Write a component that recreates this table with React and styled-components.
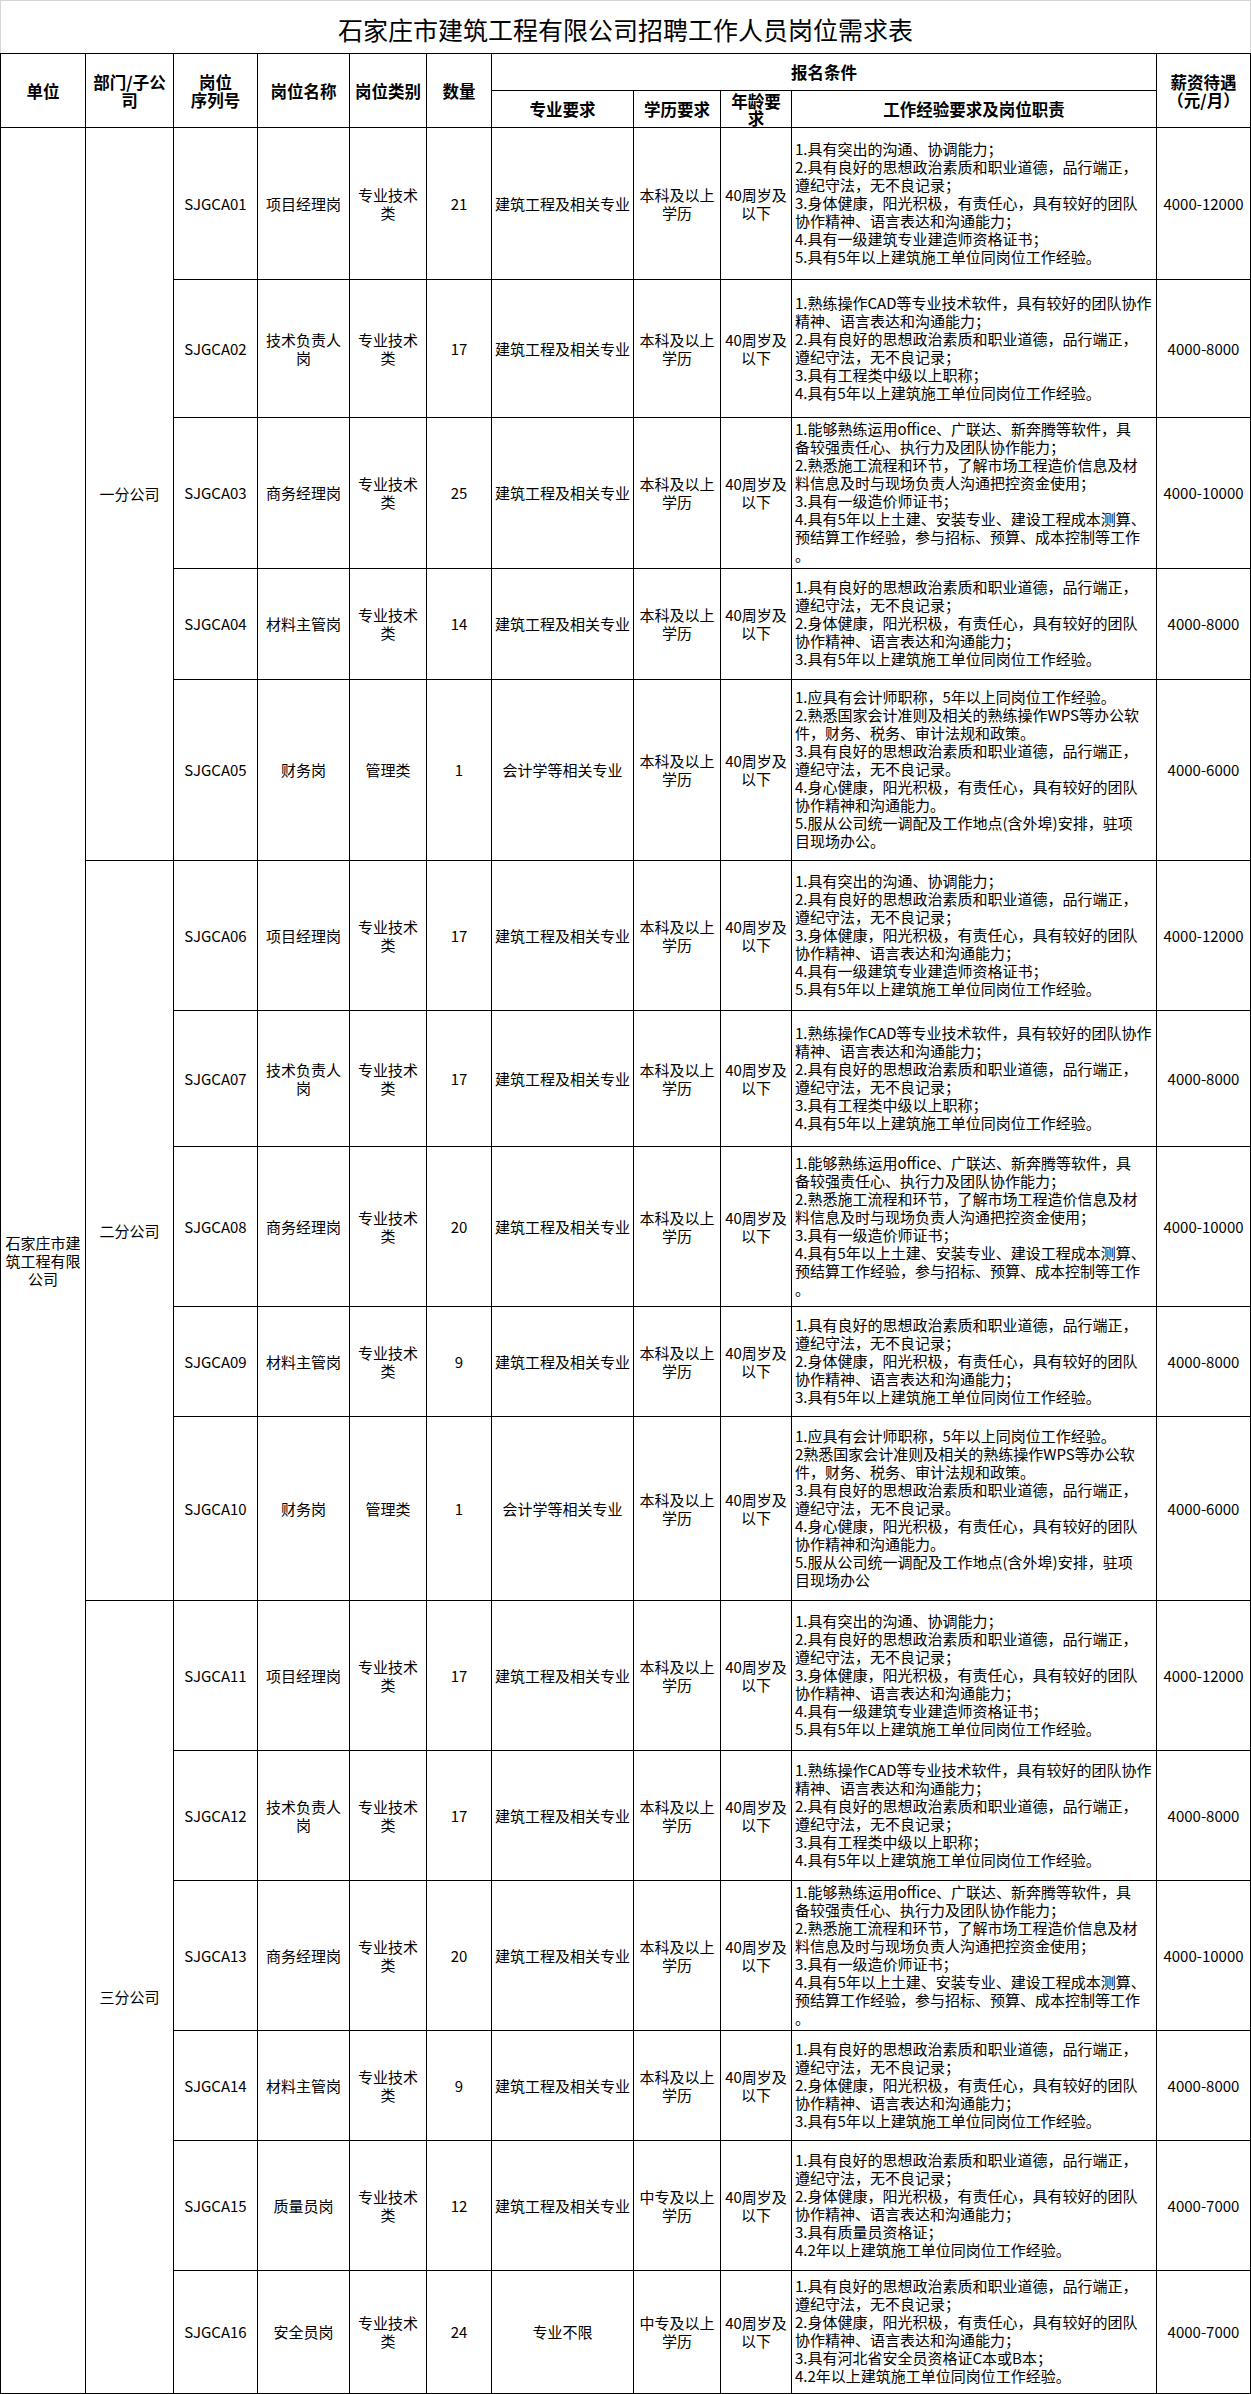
import React from 'react';
import styled, { createGlobalStyle } from 'styled-components';

const GlobalStyle = createGlobalStyle`
  html, body {
    margin: 0;
    padding: 0;
    background: #fff;
  }
  body {
    font-family: "Noto Sans CJK SC", "Liberation Sans", sans-serif;
    color: #000;
  }
`;

// widths between the 1px rules of the sheet
const COLS = [84, 87, 83, 91, 76, 64, 141, 86, 70, 364, 93];
const HEAD_ROWS = [36, 36];

const DETAIL_PM = [
  '1.具有突出的沟通、协调能力；',
  '2.具有良好的思想政治素质和职业道德，品行端正，',
  '遵纪守法，无不良记录；',
  '3.身体健康，阳光积极，有责任心，具有较好的团队',
  '协作精神、语言表达和沟通能力；',
  '4.具有一级建筑专业建造师资格证书；',
  '5.具有5年以上建筑施工单位同岗位工作经验。',
].join('\n');

const DETAIL_TECH = [
  '1.熟练操作CAD等专业技术软件，具有较好的团队协作',
  '精神、语言表达和沟通能力；',
  '2.具有良好的思想政治素质和职业道德，品行端正，',
  '遵纪守法，无不良记录；',
  '3.具有工程类中级以上职称；',
  '4.具有5年以上建筑施工单位同岗位工作经验。',
].join('\n');

const DETAIL_BIZ = [
  '1.能够熟练运用office、广联达、新奔腾等软件，具',
  '备较强责任心、执行力及团队协作能力；',
  '2.熟悉施工流程和环节，了解市场工程造价信息及材',
  '料信息及时与现场负责人沟通把控资金使用；',
  '3.具有一级造价师证书；',
  '4.具有5年以上土建、安装专业、建设工程成本测算、',
  '预结算工作经验，参与招标、预算、成本控制等工作',
  '。',
].join('\n');

const DETAIL_MAT = [
  '1.具有良好的思想政治素质和职业道德，品行端正，',
  '遵纪守法，无不良记录；',
  '2.身体健康，阳光积极，有责任心，具有较好的团队',
  '协作精神、语言表达和沟通能力；',
  '3.具有5年以上建筑施工单位同岗位工作经验。',
].join('\n');

const detailFinance = (second, last) =>
  [
    '1.应具有会计师职称，5年以上同岗位工作经验。',
    second,
    '件，财务、税务、审计法规和政策。',
    '3.具有良好的思想政治素质和职业道德，品行端正，',
    '遵纪守法，无不良记录。',
    '4.身心健康，阳光积极，有责任心，具有较好的团队',
    '协作精神和沟通能力。',
    '5.服从公司统一调配及工作地点(含外埠)安排，驻项',
    last,
  ].join('\n');

const detailSite = (cert) =>
  [
    '1.具有良好的思想政治素质和职业道德，品行端正，',
    '遵纪守法，无不良记录；',
    '2.身体健康，阳光积极，有责任心，具有较好的团队',
    '协作精神、语言表达和沟通能力；',
    cert,
    '4.2年以上建筑施工单位同岗位工作经验。',
  ].join('\n');

const TECH = '专业技术\n类';
const MAJOR = '建筑工程及相关专业';
const BACHELOR = '本科及以上\n学历';
const SECONDARY = '中专及以上\n学历';
const AGE = '40周岁及\n以下';

const job = (code, name, type, count, major, edu, detail, pay, h) => ({
  code, name, type, count, major, edu, detail, pay, h,
});

const BRANCHES = [
  {
    name: '一分公司',
    jobs: [
      job('SJGCA01', '项目经理岗', TECH, 21, MAJOR, BACHELOR, DETAIL_PM, '4000-12000', 151),
      job('SJGCA02', '技术负责人\n岗', TECH, 17, MAJOR, BACHELOR, DETAIL_TECH, '4000-8000', 137),
      job('SJGCA03', '商务经理岗', TECH, 25, MAJOR, BACHELOR, DETAIL_BIZ, '4000-10000', 150),
      job('SJGCA04', '材料主管岗', TECH, 14, MAJOR, BACHELOR, DETAIL_MAT, '4000-8000', 110),
      job('SJGCA05', '财务岗', '管理类', 1, '会计学等相关专业', BACHELOR,
        detailFinance('2.熟悉国家会计准则及相关的熟练操作WPS等办公软', '目现场办公。'), '4000-6000', 180),
    ],
  },
  {
    name: '二分公司',
    jobs: [
      job('SJGCA06', '项目经理岗', TECH, 17, MAJOR, BACHELOR, DETAIL_PM, '4000-12000', 149),
      job('SJGCA07', '技术负责人\n岗', TECH, 17, MAJOR, BACHELOR, DETAIL_TECH, '4000-8000', 135),
      job('SJGCA08', '商务经理岗', TECH, 20, MAJOR, BACHELOR, DETAIL_BIZ, '4000-10000', 159),
      job('SJGCA09', '材料主管岗', TECH, 9, MAJOR, BACHELOR, DETAIL_MAT, '4000-8000', 109),
      job('SJGCA10', '财务岗', '管理类', 1, '会计学等相关专业', BACHELOR,
        detailFinance('2熟悉国家会计准则及相关的熟练操作WPS等办公软', '目现场办公'), '4000-6000', 183),
    ],
  },
  {
    name: '三分公司',
    jobs: [
      job('SJGCA11', '项目经理岗', TECH, 17, MAJOR, BACHELOR, DETAIL_PM, '4000-12000', 149),
      job('SJGCA12', '技术负责人\n岗', TECH, 17, MAJOR, BACHELOR, DETAIL_TECH, '4000-8000', 129),
      job('SJGCA13', '商务经理岗', TECH, 20, MAJOR, BACHELOR, DETAIL_BIZ, '4000-10000', 149),
      job('SJGCA14', '材料主管岗', TECH, 9, MAJOR, BACHELOR, DETAIL_MAT, '4000-8000', 109),
      job('SJGCA15', '质量员岗', TECH, 12, MAJOR, SECONDARY,
        detailSite('3.具有质量员资格证；'), '4000-7000', 129),
      job('SJGCA16', '安全员岗', TECH, 24, '专业不限', SECONDARY,
        detailSite('3.具有河北省安全员资格证C本或B本；'), '4000-7000', 122),
    ],
  },
];

const ALL_JOBS = BRANCHES.flatMap((b) => b.jobs);
const ROW_TRACKS = [...HEAD_ROWS, ...ALL_JOBS.map((j) => j.h)];

export default function App() {
  return (
    <>
      <GlobalStyle />
      <Page>
        <Title>石家庄市建筑工程有限公司招聘工作人员岗位需求表</Title>
        <Sheet $colSizes={COLS} $rowSizes={ROW_TRACKS}>
          <Head $rows={2}>单位</Head>
          <Head $rows={2}>{'部门/子公\n司'}</Head>
          <Head $rows={2}>{'岗位\n序列号'}</Head>
          <Head $rows={2}>岗位名称</Head>
          <Head $rows={2}>岗位类别</Head>
          <Head $rows={2}>数量</Head>
          <Head $cols={4}>报名条件</Head>
          <Head $rows={2}>{'薪资待遇\n（元/月）'}</Head>
          <Head>专业要求</Head>
          <Head>学历要求</Head>
          <Head $tight>{'年龄要\n求'}</Head>
          <Head>工作经验要求及岗位职责</Head>

          {BRANCHES.map((branch, bi) =>
            branch.jobs.map((j, ji) => (
              <React.Fragment key={j.code}>
                {bi === 0 && ji === 0 && (
                  <Cell $rows={ALL_JOBS.length}>{'石家庄市建\n筑工程有限\n公司'}</Cell>
                )}
                {ji === 0 && <Cell $rows={branch.jobs.length}>{branch.name}</Cell>}
                <Cell>{j.code}</Cell>
                <Cell>{j.name}</Cell>
                <Cell>{j.type}</Cell>
                <Cell>{j.count}</Cell>
                <Cell>{j.major}</Cell>
                <Cell>{j.edu}</Cell>
                <Cell>{AGE}</Cell>
                <Detail>{j.detail}</Detail>
                <Cell>{j.pay}</Cell>
              </React.Fragment>
            ))
          )}
        </Sheet>
      </Page>
    </>
  );
}

const Page = styled.div`
  width: 1251px;
  font-family: "Noto Sans CJK SC", "Liberation Sans", sans-serif;
  color: #000;
`;

const Title = styled.div`
  box-sizing: border-box;
  height: 53px;
  border: 1px solid #d6d6d6;
  border-bottom: none;
  display: flex;
  align-items: center;
  justify-content: center;
  padding-top: 3px;
  font-size: 25px;
  line-height: 30px;
  font-weight: 400;
`;

const Sheet = styled.div`
  box-sizing: border-box;
  display: grid;
  grid-template-columns: ${(p) => p.$colSizes.map((w) => `${w}px`).join(' ')};
  grid-template-rows: ${(p) => p.$rowSizes.map((h) => `${h}px`).join(' ')};
  gap: 1px;
  padding: 1px;
  background: #000;
`;

const Box = styled.div`
  grid-row: span ${(p) => p.$rows || 1};
  grid-column: span ${(p) => p.$cols || 1};
  background: #fff;
  display: flex;
  align-items: center;
  justify-content: center;
  text-align: center;
  white-space: pre-line;
  min-width: 0;
  min-height: 0;
`;

const Head = styled(Box)`
  font-size: 16.5px;
  line-height: ${(p) => (p.$tight ? '17px' : '18px')};
  font-weight: 700;
  padding: ${(p) => (p.$tight ? '2px 0 0' : '0')};
`;

const Cell = styled(Box)`
  font-size: 15px;
  line-height: 18px;
  padding: 0 2px;
`;

const Detail = styled(Cell)`
  justify-content: flex-start;
  text-align: left;
  white-space: pre;
  padding: 0 0 2px 3px;
`;
